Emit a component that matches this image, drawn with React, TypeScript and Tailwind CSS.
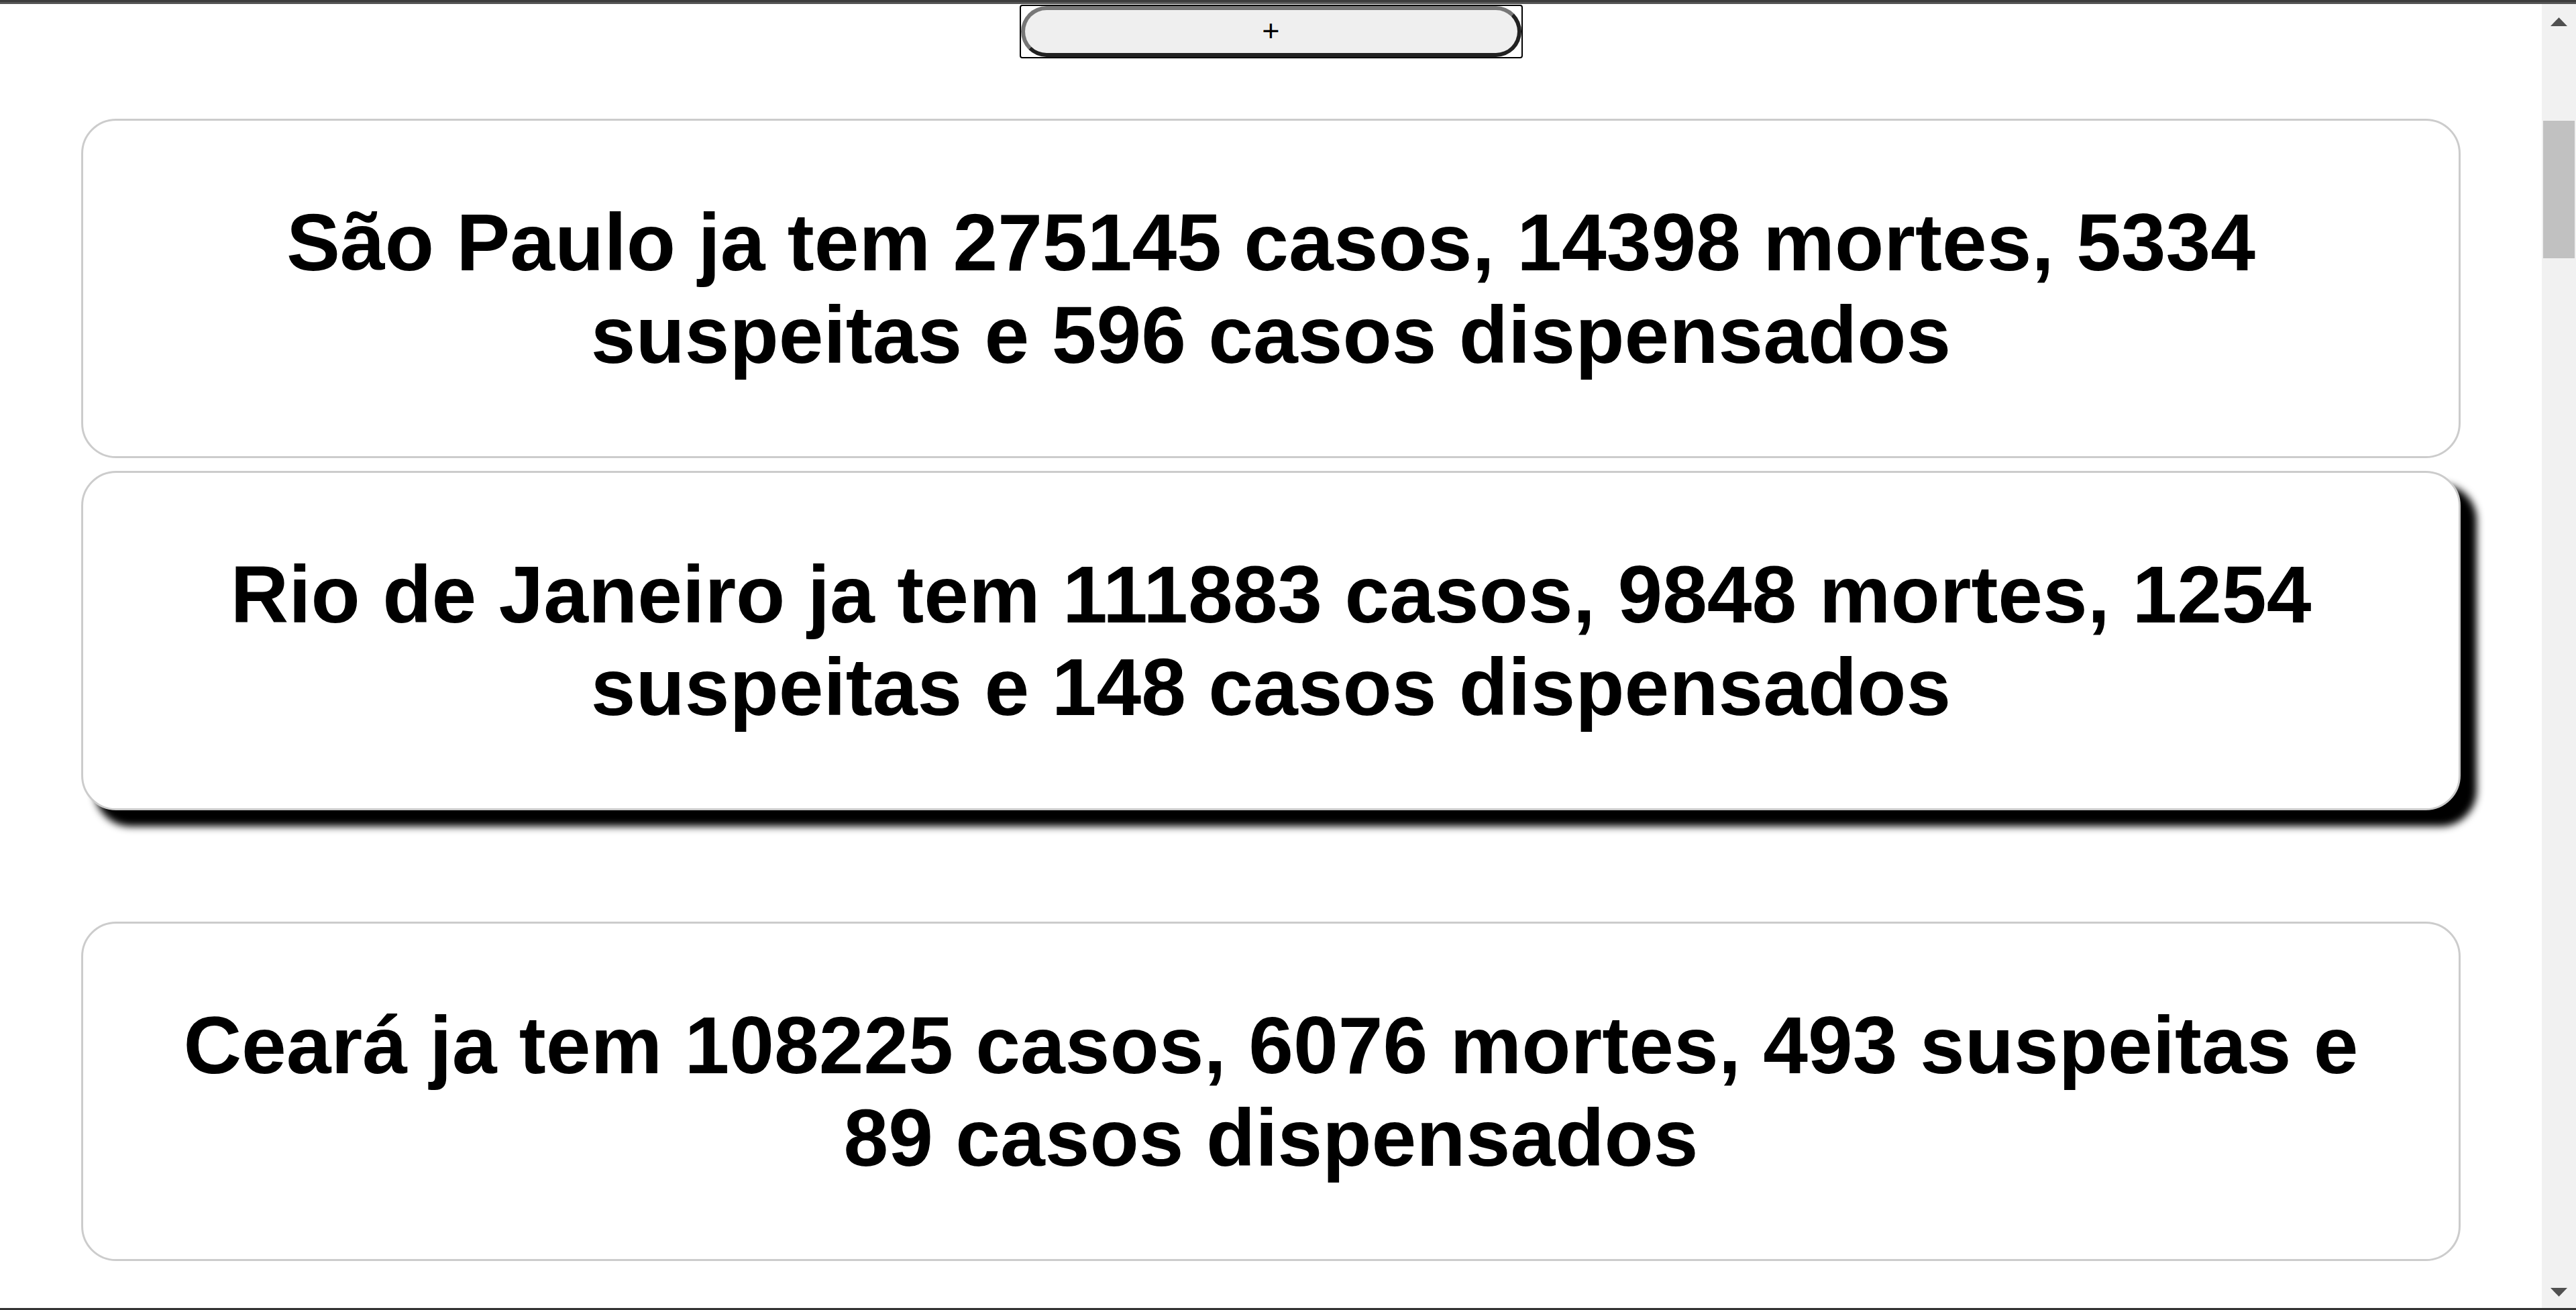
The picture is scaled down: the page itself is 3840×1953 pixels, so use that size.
const states = [
  { name: 'São Paulo', casos: 275145, mortes: 14398, suspeitas: 5334, dispensados: 596 },
  { name: 'Rio de Janeiro', casos: 111883, mortes: 9848, suspeitas: 1254, dispensados: 148 },
  { name: 'Ceará', casos: 108225, mortes: 6076, suspeitas: 493, dispensados: 89 },
];

function StateCard({ item, hovered, className }: { item: any; hovered?: boolean; className?: string }) {
  return (
    <div
      className={`mx-[121px] h-[506px] shrink-0 flex items-center justify-center px-[100px] bg-white border-[3px] border-[#cccccc] rounded-[52px] ${
        hovered ? 'shadow-[22px_22px_12px_2px_#000]' : ''
      } ${className ?? ''}`}
    >
      <p className="text-center text-[120px] leading-[1.15] font-bold text-black">
        {item.name} ja tem {item.casos} casos, {item.mortes} mortes, {item.suspeitas} suspeitas e{' '}
        {item.dispensados} casos dispensados
      </p>
    </div>
  );
}

function Scrollbar() {
  return (
    <div className="w-[51px] shrink-0 bg-[#f1f1f1] flex flex-col items-center">
      <svg width="25" height="13" viewBox="0 0 25 13" className="mt-[20px]">
        <polygon points="12.5,0 25,13 0,13" fill="#505050" />
      </svg>
      <div className="mt-[141px] w-[47px] h-[205px] bg-[#c1c1c1]" />
      <div className="flex-1" />
      <svg width="25" height="13" viewBox="0 0 25 13" className="mb-[17px]">
        <polygon points="0,0 25,0 12.5,13" fill="#505050" />
      </svg>
    </div>
  );
}

export default function App() {
  return (
    <div className="w-full h-[1953px] flex flex-col overflow-hidden bg-white font-['Liberation_Sans',Arial,sans-serif]">
      <div className="h-[3px] bg-[#3c3c3c]" />
      <div className="h-[3px] bg-[#555555]" />

      <div className="flex-1 flex min-h-0">
        <div className="flex-1 flex flex-col min-w-0">
          <div className="self-center mt-[1px] w-[750px] h-[80px] border-2 border-black rounded-[4px] flex">
            <button className="flex-1 flex items-center justify-center pb-[3px] rounded-full border-[6px] border-t-[#777777] border-l-[#777777] border-b-[#222222] border-r-[#222222] bg-[#efefef] text-[45px] leading-none text-black">
              +
            </button>
          </div>

          <StateCard item={states[0]} className="mt-[90px]" />
          <StateCard item={states[1]} hovered className="mt-[19px]" />
          <StateCard item={states[2]} className="mt-[166px]" />
        </div>

        <Scrollbar />
      </div>

      <div className="h-[3px] bg-[#333333]" />
    </div>
  );
}
